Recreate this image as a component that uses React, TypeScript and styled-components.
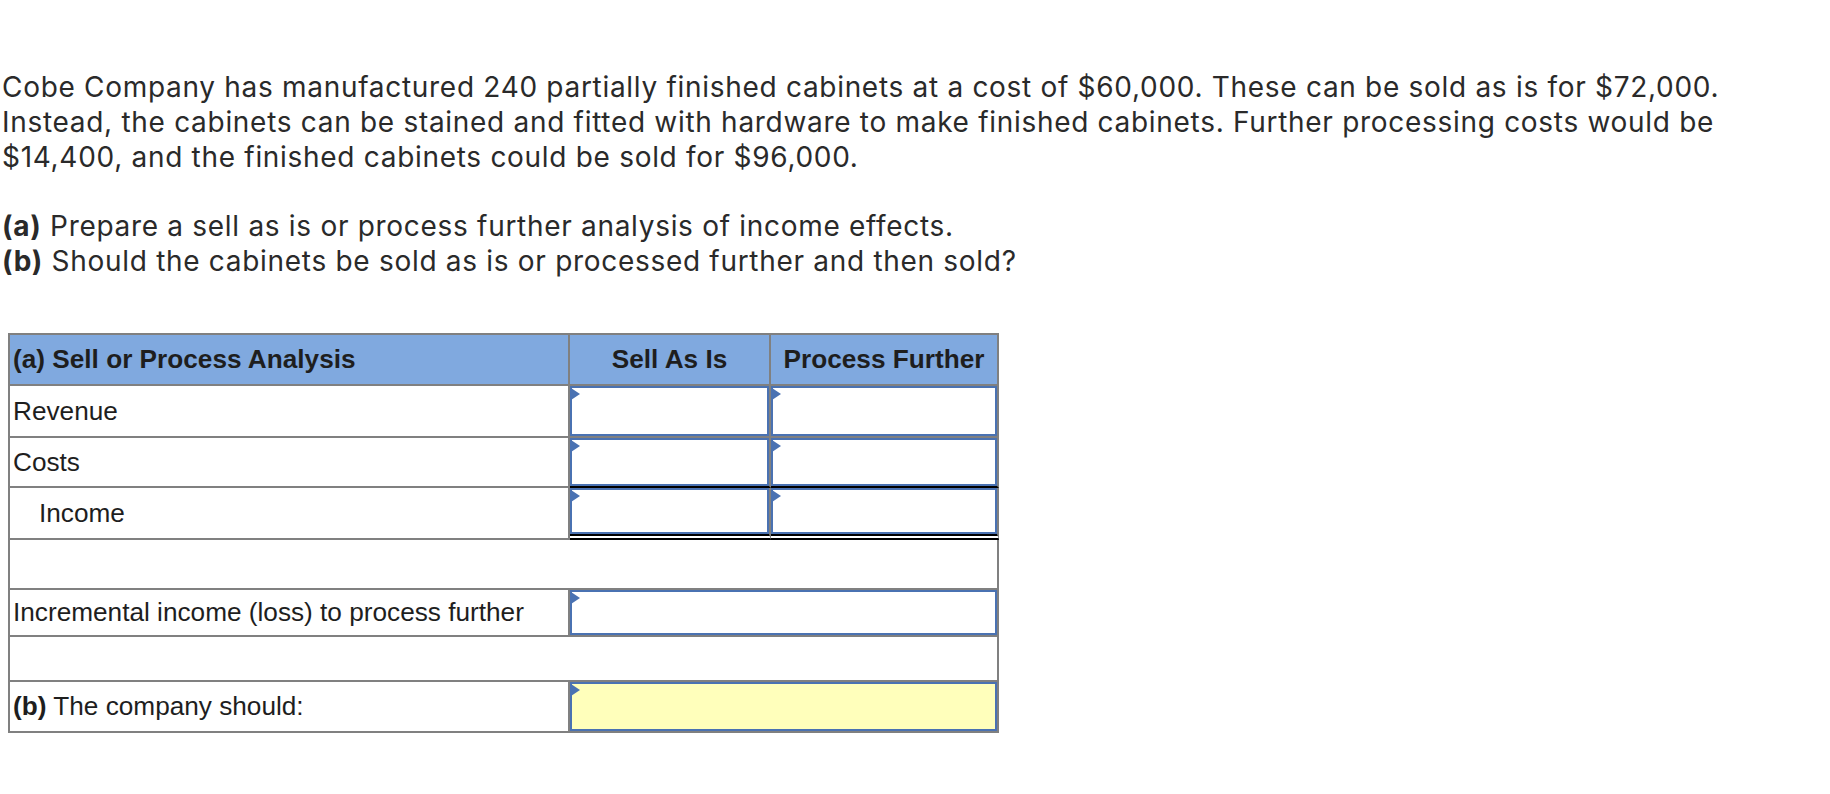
import React from 'react';
import styled, { createGlobalStyle } from 'styled-components';

const GlobalStyle = createGlobalStyle`
  body {
    margin: 0;
    background: #fff;
  }
`;

type RowKind = 'plain' | 'single' | 'double';

const App: React.FC = () => {
  return (
    <>
      <GlobalStyle />
      <Page>
        <Intro>
          Cobe Company has manufactured 240 partially finished cabinets at a cost of $60,000. These can be sold as is for $72,000.
          <br />
          Instead, the cabinets can be stained and fitted with hardware to make finished cabinets. Further processing costs would be
          <br />
          $14,400, and the finished cabinets could be sold for $96,000.
        </Intro>
        <Questions>
          <b>(a)</b> Prepare a sell as is or process further analysis of income effects.
          <br />
          <b>(b)</b> Should the cabinets be sold as is or processed further and then sold?
        </Questions>

        <Sheet>
          <HeadCell>(a) Sell or Process Analysis</HeadCell>
          <HeadCell $center>Sell As Is</HeadCell>
          <HeadCell $center>Process Further</HeadCell>

          <LabelCell>Revenue</LabelCell>
          <Answer />
          <Answer />

          <LabelCell>Costs</LabelCell>
          <Answer rule="single" />
          <Answer rule="single" />

          <LabelCell $indent>Income</LabelCell>
          <Answer rule="double" />
          <Answer rule="double" />

          <BlankRow />

          <LabelCell>Incremental income (loss) to process further</LabelCell>
          <Answer wide />

          <BlankRow />

          <LabelCell>
            <span>
              <b>(b)</b> The company should:
            </span>
          </LabelCell>
          <Answer wide choice />
        </Sheet>
      </Page>
    </>
  );
};

const Answer: React.FC<{ rule?: RowKind; wide?: boolean; choice?: boolean }> = ({ rule = 'plain', wide, choice }) => (
  <InputCell $rule={rule} $wide={wide}>
    <Entry $choice={choice}>
      <Marker />
    </Entry>
  </InputCell>
);

export default App;

const Page = styled.div`
  padding-top: 70px;
`;

const Intro = styled.p`
  margin: 0 0 34px 2px;
  font-family: Inter, "Open Sans", sans-serif;
  font-size: 28px;
  letter-spacing: 0.7px;
  line-height: 35px;
  color: #2a2a2a;
  white-space: nowrap;
`;

const Questions = styled(Intro)`
  margin-bottom: 54px;

  b {
    font-weight: 700;
  }
`;

const Sheet = styled.div`
  display: grid;
  grid-template-columns: 560px 201px 228px;
  grid-template-rows: 51px 52px 50px 52px 50px 47px 45px 51px;
  width: max-content;
  margin-left: 8px;
  border-left: 2px solid #808080;
  border-top: 2px solid #808080;
  font-family: "Liberation Sans", Arial, sans-serif;
  font-size: 26.2px;
  color: #1e1e1e;
`;

const Cell = styled.div`
  box-sizing: border-box;
  border-right: 2px solid #808080;
  border-bottom: 2px solid #808080;
  display: flex;
  align-items: center;
  min-width: 0;
`;

const HeadCell = styled(Cell)<{ $center?: boolean }>`
  background: #80a9df;
  font-weight: 700;
  justify-content: ${(p) => (p.$center ? 'center' : 'flex-start')};
  padding-left: ${(p) => (p.$center ? '0' : '3px')};
`;

const LabelCell = styled(Cell)<{ $indent?: boolean }>`
  padding-left: ${(p) => (p.$indent ? '29px' : '3px')};
  white-space: nowrap;

  b {
    font-weight: 700;
  }
`;

const BlankRow = styled(Cell)`
  grid-column: 1 / -1;
`;

const InputCell = styled(Cell)<{ $rule: RowKind; $wide?: boolean }>`
  grid-column: ${(p) => (p.$wide ? 'span 2' : 'auto')};
  align-items: stretch;
  border-bottom: ${(p) =>
    p.$rule === 'double' ? '6px double #000' : p.$rule === 'single' ? '2px solid #000' : '2px solid #808080'};
`;

const Entry = styled.div<{ $choice?: boolean }>`
  position: relative;
  flex: 1;
  border: 2px solid #4a72b2;
  background: ${(p) => (p.$choice ? '#ffffbb' : '#fff')};
`;

const Marker = styled.span`
  position: absolute;
  top: 0;
  left: -1px;
  width: 0;
  height: 0;
  border-top: 6px solid transparent;
  border-bottom: 6px solid transparent;
  border-left: 9px solid #4a72b2;
`;
